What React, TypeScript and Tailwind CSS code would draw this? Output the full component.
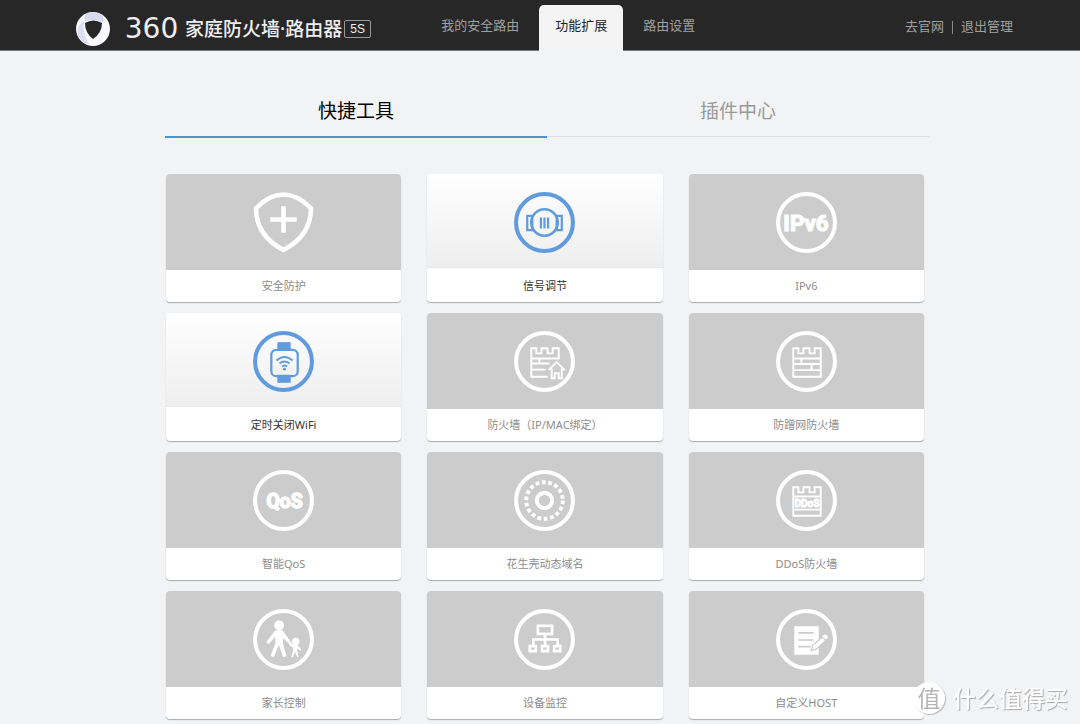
import type { ReactNode } from "react";

const Ring = () => <circle cx="30" cy="30" r="28" strokeWidth="4" />;

// 城墙轮廓
const Castle = () => <path d="M17 45V17h5v5h5v-5h6v5h5v-5h6v28z" />;

const icons: Record<string, ReactNode> = {
    shield: (
        <>
            <path d="M3 16Q16 2.5 30 2.5T57 16Q57 43 30 57Q3 43 3 16z" strokeWidth="4.5" />
            <path d="M30 14v26M17 27h26" strokeWidth="4.5" />
        </>
    ),
    signal: (
        <>
            <Ring />
            <circle cx="30" cy="30" r="13" strokeWidth="2.6" />
            <path d="M18 23.5h-5v14h5zM42 23.5h5v14h-5z" strokeWidth="2.2" />
            <path d="M26.5 25v11M30 25v11M33.500 25v11" strokeWidth="2.2" />
        </>
    ),
    ipv6: (
        <>
            <Ring />
            <text x="29.5" y="38.5" textAnchor="middle" fill="currentColor" strokeWidth="1.2" className="font-['Roboto','Liberation_Sans',sans-serif] text-[22px] font-bold">IPv6</text>
        </>
    ),
    watch: (
        <>
            <Ring />
            <path d="M24.5 11.5h12v7h-12zM24.5 43.5h12v7h-12z" fill="currentColor" strokeWidth="1" />
            <rect x="18" y="18.5" width="26" height="26" rx="5" strokeWidth="2.2" />
            <path d="M23 29q8-7 16 0M26 32q5-4 10 0M28.5 35q2.5-2 5 0" strokeWidth="1.8" />
            <circle cx="31" cy="37.5" r="1.4" fill="currentColor" stroke="none" />
        </>
    ),
    wallHouse: (
        <>
            <Ring />
            <path d="M33 45H17V17h5v5h5v-5h6v5h5v-5h6v10H17M17 32h18M25 27v5M17 38h14" />
            <path d="M34 38.5l8-8 8 8M37 37v9.5h3v-5h4v5h3V37" />
        </>
    ),
    wall: (
        <>
            <Ring />
            <Castle />
            <path d="M17 27h27M17 32.5h27M17 38.5h27M25 27v5.5M35 32.5v6" />
        </>
    ),
    qos: (
        <>
            <Ring />
            <text x="31" y="37" textAnchor="middle" fill="currentColor" strokeWidth="1.4" className="font-['Liberation_Sans_Narrow','Roboto',sans-serif] text-[19px] font-bold">QoS</text>
        </>
    ),
    peanut: (
        <>
            <Ring />
            {/* 18 段虚线，周长约 113 */}
            <circle cx="30" cy="30" r="18" strokeWidth="3.8" strokeDasharray="3.7 2.583" />
            <circle cx="30" cy="30" r="7.5" strokeWidth="4" />
        </>
    ),
    ddos: (
        <>
            <Ring />
            <Castle />
            <path d="M17 26h27M17 39h27" />
            <text x="30.5" y="36" textAnchor="middle" fill="currentColor" strokeWidth="0.9" className="font-['Roboto','Liberation_Sans',sans-serif] text-[10px] font-bold">DDoS</text>
        </>
    ),
    family: (
        <>
            <Ring />
            <g fill="currentColor" stroke="none">
                <circle cx="25.7" cy="16" r="4.8" />
                <path d="M22 21h7l3 4 6 8.500-1.500 1.500-7-6.500v6l3.500 12-3.500.8-4-12-5 12-3.300-1 4.800-12.300V27l-6.500 7.500-2.500-1.800z" />
                <circle cx="42" cy="32" r="3.6" />
                <path d="M36.500 33l4 2.500h3l4 4-1 1.500-3-2v2.500l1.500 5.500-1.700.5-2-5.500-2 5.500-1.800-.5 2-6V38l-4-2.500z" />
            </g>
        </>
    ),
    network: (
        <>
            <Ring />
            <g strokeWidth="2.6">
                <rect x="23.5" y="16.5" width="14" height="8" />
                <path d="M30.5 25v11M19 36v-6h24v6" />
                <path d="M15.5 36.5h6v5h-6zM27.5 36.5h6v5h-6zM39.5 36.5h6v5h-6z" />
            </g>
        </>
    ),
    host: (
        <>
            <Ring />
            <path d="M18 17h24v28H18z" fill="currentColor" stroke="none" />
            <path d="M22 23.5h15M22 30.5h15M22 37h12" stroke="#ccc" strokeWidth="1.7" />
            <path d="M34.5 41l1.500-5 9.500-8.500 3.500 3.500-9.500 8.500z" fill="currentColor" stroke="#ccc" strokeWidth="1.2" />
            <path d="M45.5 27l2-2q3 0 3.500 3l-2 2z" fill="currentColor" stroke="none" />
        </>
    ),
};

const tools = [
    { icon: "shield", name: "安全防护" },
    { icon: "signal", name: "信号调节", active: true },
    { icon: "ipv6", name: "IPv6" },
    { icon: "watch", name: "定时关闭WiFi", active: true },
    { icon: "wallHouse", name: "防火墙（IP/MAC绑定）" },
    { icon: "wall", name: "防蹭网防火墙" },
    { icon: "qos", name: "智能QoS" },
    { icon: "peanut", name: "花生壳动态域名" },
    { icon: "ddos", name: "DDoS防火墙" },
    { icon: "family", name: "家长控制" },
    { icon: "network", name: "设备监控" },
    { icon: "host", name: "自定义HOST" },
];

function ToolCard({ icon, name, active }: { icon: string; name: string; active?: boolean }) {
    return (
        <button className="flex h-32 flex-col overflow-hidden rounded-[4px] bg-white shadow-[0_1px_1px_rgba(0,0,0,0.3)]">
            <span
                className={
                    active
                        ? "flex h-[94px] w-full justify-center border-b border-[#e8e8e8] bg-linear-to-b from-white to-[#eeeeee] pt-[18px] text-[#609cdd]"
                        : "flex h-24 w-full justify-center bg-[#cccccc] pt-[18px] text-white"
                }
            >
                <svg width="61" height="61" viewBox="0 0 60 60" fill="none" stroke="currentColor" strokeWidth="1.9" aria-hidden="true">
                    {icons[icon]}
                </svg>
            </span>
            <span className={active ? "flex w-full flex-1 items-center justify-center pt-0.5 text-[11px] text-[#333]" : "flex w-full flex-1 items-center justify-center text-[11px] text-[#8c8c8c]"}>
                {name}
            </span>
        </button>
    );
}

export default function App() {
    return (
        <div className="min-h-screen bg-[#f2f3f5] font-['Noto_Sans','Noto_Sans_CJK_SC',sans-serif]">
            {/* 顶部导航 */}
            <header className="flex h-[51px] border-b border-[#77797b] bg-[#272727] pr-[67px] pl-[76px] text-[13px] text-[#a0a0a0]">
                <div className="flex items-center pt-2 text-[#eeeeee]">
                    <svg width="34" height="34" viewBox="0 0 34 34" aria-hidden="true">
                        <circle cx="17" cy="17" r="17" fill="#f8f8fd" />
                        <path d="M11 1q9-2 15 2 3 3 1 8-8-5-18-2-2-5 2-8z" fill="#d9daf1" />
                        <path d="M1 20Q2 12 8 9q-2 12 5 23Q4 31 1 20z" fill="#dcdef4" />
                        <path d="M9 11q8-5 17 0 0 10-9 16-8-6-8-16z" fill="#272727" />
                    </svg>
                    <span className="ml-2 w-[67px] text-center font-['DejaVu_Sans'] text-[28px] leading-none">360</span>
                    <span className="text-[19px] leading-none font-medium">家庭防火墙·路由器</span>
                    <span className="ml-0.5 flex h-[18px] w-[27px] items-center justify-center rounded-[2px] border border-[#999] font-['Liberation_Sans'] text-[12px] font-medium">5S</span>
                </div>
                <nav className="ml-[54px] flex gap-1 pt-[5px]">
                    <a href="#router" className="flex items-center px-4 pb-1">我的安全路由</a>
                    <a href="#extend" className="-mb-px flex items-center rounded-t-[5px] bg-[#f4f4f5] px-4 pb-1 text-[#222]">功能扩展</a>
                    <a href="#settings" className="flex items-center px-4 pb-1">路由设置</a>
                </nav>
                <div className="ml-auto flex items-center gap-2 pt-1">
                    <a href="#site">去官网</a>
                    <span className="h-[13px] w-px bg-[#8a8a8a]" />
                    <a href="#logout">退出管理</a>
                </div>
            </header>

            <main className="pb-1 pl-[14px]">
                <div className="mx-auto max-w-[764px]">
                    <div className="flex pt-[33px] text-[19px]">
                        <button className="h-[54px] flex-1 border-b-2 border-[#4d93dc] pt-0.5 text-black">快捷工具</button>
                        <button className="mb-px h-[53px] flex-1 border-b border-[#dcdfe2] pt-0.5 text-[#999]">插件中心</button>
                    </div>
                    <div className="mt-9 mr-[5px] ml-px grid grid-cols-3 gap-x-[26px] gap-y-[11px]">
                        {tools.map((tool) => (
                            <ToolCard key={tool.name} {...tool} />
                        ))}
                    </div>
                </div>
            </main>

            {/* 水印 */}
            <div className="pointer-events-none fixed right-3 bottom-[10px] flex items-center gap-2 text-white">
                <span className="flex size-8 items-center justify-center rounded-full bg-white text-[23px] leading-none text-[#b5b5b5] shadow-[1px_1px_1px_#bbb]">值</span>
                <span className="text-[23px] leading-none font-medium [text-shadow:1px_1px_1px_#aaa]">什么值得买</span>
            </div>
        </div>
    );
}
